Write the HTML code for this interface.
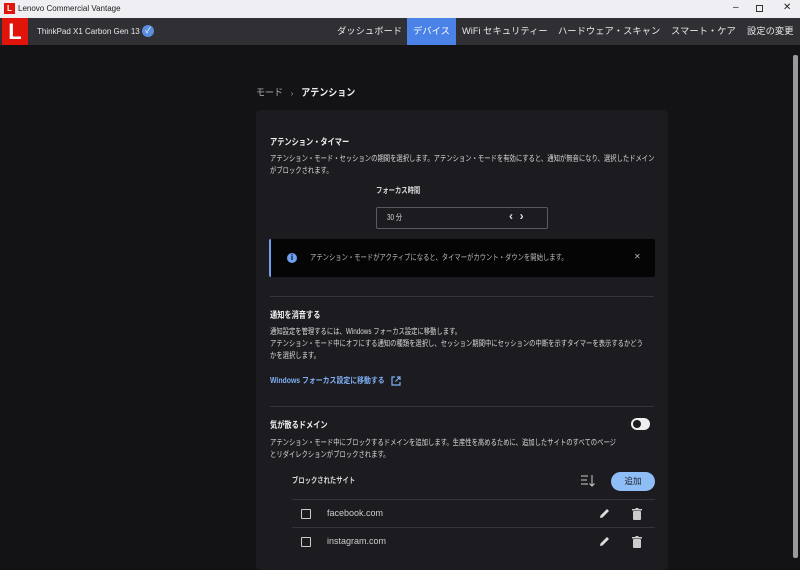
<!DOCTYPE html>
<html><head><meta charset="utf-8"><style>
*{box-sizing:border-box;margin:0;padding:0}
body{width:800px;height:558px;overflow:hidden;background:#131315;font-family:"Liberation Sans","Noto Sans CJK JP",sans-serif;color:#e6e6e6;position:relative}
.tb{position:absolute;left:0;top:0;width:800px;height:18px;background:#eeeef3;color:#222;font-size:8px}
.hd{position:absolute;left:0;top:18px;width:800px;height:27px;background:#2f2f34}
.logo{position:absolute;left:2px;top:18px;width:26px;height:27px;background:#e1140a;color:#fff;font-weight:bold;font-size:22px;line-height:27px;text-align:center}
.nav{position:absolute;top:18px;height:27px;line-height:27px;font-size:9.3px;color:#e8e8e8;white-space:nowrap}
.abs{position:absolute}
.card{position:absolute;left:256px;top:110px;width:412px;height:460px;background:#1c1c20;border-radius:5px}
.t{position:absolute;font-size:8px;color:#d8d8d8;line-height:12px;white-space:nowrap;transform:scaleX(.79);transform-origin:0 0}
.h{position:absolute;font-size:9px;font-weight:bold;color:#f0f0f0;white-space:nowrap;transform:scaleX(.8);transform-origin:0 0}
.u{position:absolute;font-size:9px;color:#ccc;white-space:nowrap}
.sep{position:absolute;left:270px;width:384px;height:1px;background:#34343a}
.cb{position:absolute;left:301px;width:10px;height:10px;border:1.3px solid #ccc;border-radius:1px}
</style></head><body>
<div class="tb"><div class="abs" style="left:4px;top:3px;width:11px;height:11px;background:#e1140a;color:#fff;font-size:8px;line-height:11px;text-align:center;font-weight:bold">L</div>
<div class="abs" style="left:18px;top:4px">Lenovo Commercial Vantage</div>
<div class="abs" style="left:733px;top:2px;font-size:10px">–</div>
<div class="abs" style="left:756px;top:5px;width:7px;height:7px;border:1px solid #333"></div>
<div class="abs" style="left:783px;top:2px;font-size:10px">✕</div></div>
<div class="hd"></div>
<div class="logo">L</div>
<div class="nav" style="left:37px;font-size:8px">ThinkPad X1 Carbon Gen 13</div>
<div class="abs" style="left:142px;top:25px;width:12px;height:12px;border-radius:50%;background:#5b8de0;color:#fff;font-size:8px;text-align:center;line-height:12px">✓</div>
<div class="nav" style="left:337px">ダッシュボード</div>
<div class="nav" style="left:407px;width:49px;background:#4a82e8;text-align:center;color:#fff">デバイス</div>
<div class="nav" style="left:462px">WiFi セキュリティー</div>
<div class="nav" style="left:558px">ハードウェア・スキャン</div>
<div class="nav" style="left:671px">スマート・ケア</div>
<div class="nav" style="left:747px">設定の変更</div>
<div class="abs" style="left:793px;top:55px;width:5px;height:503px;background:#9a9a9a;border-radius:2px"></div>
<div class="abs" style="left:256px;top:84px;font-size:10px;color:#aaa;white-space:nowrap;transform:scaleX(.9);transform-origin:0 0">モード <span style="font-size:8px;margin:0 6px">›</span> <span style="color:#eee;font-weight:bold">アテンション</span></div>
<div class="card"></div>
<div class="h" style="left:270px;top:135px">アテンション・タイマー</div>
<div class="t" style="left:270px;top:153px">アテンション・モード・セッションの期間を選択します。アテンション・モードを有効にすると、通知が無音になり、選択したドメイン<br>がブロックされます。</div>
<div class="t" style="left:376px;top:185px;font-weight:bold">フォーカス時間</div>
<div class="abs" style="left:376px;top:207px;width:172px;height:22px;border:1px solid #5a5a60;border-radius:2px"></div>
<div class="t" style="left:387px;top:212px">30 分</div>
<div class="abs" style="left:509px;top:209px;font-size:12px;font-weight:bold;color:#ddd">‹ &nbsp;›</div>
<div class="abs" style="left:269px;top:239px;width:386px;height:38px;background:#050506;border-left:2px solid #6e9ff0;border-radius:2px"></div>
<div class="abs" style="left:287px;top:253px;width:10px;height:10px;border-radius:50%;background:#6e9ff0;color:#050506;font-size:8px;font-weight:bold;text-align:center;line-height:10px">i</div>
<div class="t" style="left:310px;top:252px;color:#bbb">アテンション・モードがアクティブになると、タイマーがカウント・ダウンを開始します。</div>
<div class="abs" style="left:634px;top:252px;color:#bbb;font-size:8px">✕</div>
<div class="sep" style="top:296px"></div>
<div class="h" style="left:270px;top:308px">通知を消音する</div>
<div class="t" style="left:270px;top:326px">通知設定を管理するには、Windows フォーカス設定に移動します。<br>アテンション・モード中にオフにする通知の種類を選択し、セッション期間中にセッションの中断を示すタイマーを表示するかどう<br>かを選択します。</div>
<div class="t" style="left:270px;top:375px;color:#7fb0f5;font-weight:bold;transform:scaleX(.86)">Windows フォーカス設定に移動する</div>
<svg class="abs" style="left:391px;top:376px" width="10" height="10" viewBox="0 0 10 10" fill="none" stroke="#7fb0f5" stroke-width="1.2"><path d="M4 1H1v8h8V6M6 1h3v3M9 1L4.5 5.5"/></svg>
<div class="sep" style="top:406px"></div>
<div class="h" style="left:270px;top:418px">気が散るドメイン</div>
<div class="abs" style="left:631px;top:418px;width:19px;height:12px;border-radius:6px;background:#eee"><div style="position:absolute;left:2px;top:2px;width:8px;height:8px;border-radius:50%;background:#1c1c20"></div></div>
<div class="t" style="left:270px;top:437px">アテンション・モード中にブロックするドメインを追加します。生産性を高めるために、追加したサイトのすべてのページ<br>とリダイレクションがブロックされます。</div>
<div class="t" style="left:292px;top:475px;font-weight:bold">ブロックされたサイト</div>
<svg class="abs" style="left:580px;top:474px" width="16" height="14" viewBox="0 0 16 14" fill="none" stroke="#ccc" stroke-width="1"><path d="M1 2h7M1 6h6M1 10h7M12 1v11M9.5 9.5L12 12l2.5-2.5"/></svg>
<div class="abs" style="left:611px;top:472px;width:44px;height:19px;border-radius:10px;background:#8fbdf5;color:#1c1c20;font-size:8.5px;text-align:center;line-height:19px">追加</div>
<div class="abs" style="left:292px;top:499px;width:363px;height:1px;background:#34343a"></div>
<div class="abs" style="left:292px;top:527px;width:363px;height:1px;background:#34343a"></div>
<div class="cb" style="top:509px"></div>
<div class="u" style="left:327px;top:508px">facebook.com</div>
<svg class="abs" style="left:599px;top:508px" width="11" height="11" viewBox="0 0 11 11"><path d="M1 10l.5-2.5L8 1l2 2-6.5 6.5z" fill="#ddd"/></svg>
<svg class="abs" style="left:632px;top:508px" width="10" height="12" viewBox="0 0 10 12" fill="#ccc"><rect x="0" y="1" width="10" height="1.5"/><rect x="3.5" y="0" width="3" height="1.5"/><rect x="1" y="3" width="8" height="9" rx="1"/></svg>
<div class="cb" style="top:537px"></div>
<div class="u" style="left:327px;top:536px">instagram.com</div>
<svg class="abs" style="left:599px;top:536px" width="11" height="11" viewBox="0 0 11 11"><path d="M1 10l.5-2.5L8 1l2 2-6.5 6.5z" fill="#ddd"/></svg>
<svg class="abs" style="left:632px;top:536px" width="10" height="12" viewBox="0 0 10 12" fill="#ccc"><rect x="0" y="1" width="10" height="1.5"/><rect x="3.5" y="0" width="3" height="1.5"/><rect x="1" y="3" width="8" height="9" rx="1"/></svg>
</body></html>
